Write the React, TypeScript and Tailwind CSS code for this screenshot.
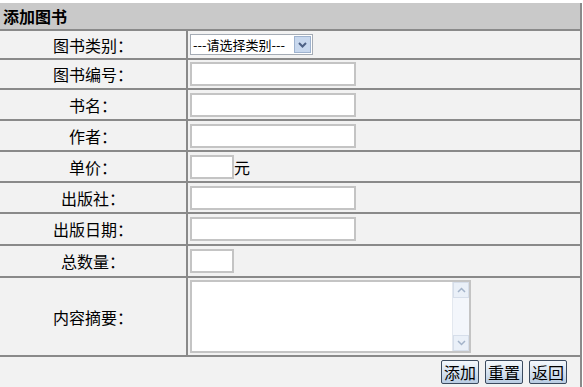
import React from "react";

const font = { fontFamily: '"Noto Sans CJK SC", "DejaVu Sans", sans-serif' };

function Row({ label, h, children }: { label: string; h: string; children: React.ReactNode }) {
  return (
    <div className={`flex ${h} border-b-2 border-[#8a8a8a]`}>
      <div className="w-[186px] flex items-center justify-center text-[16px] text-black bg-[#f2f2f2]">
        {label}
      </div>
      <div className="flex-1 flex items-center pl-[2px] border-l-2 border-[#8a8a8a] bg-[#f2f2f2]">
        {children}
      </div>
    </div>
  );
}

function TextBox({ w }: { w: string }) {
  return <input className={`${w} h-[24px] bg-white border-2 border-[#c4c4c4] outline-none`} />;
}

function Btn({ children }: { children: React.ReactNode }) {
  return (
    <button
      type="button"
      className="h-[24px] px-[2px] text-[16px] leading-none text-black border border-[#3b4a5e] rounded-[2px] bg-gradient-to-b from-[#f4f8fc] to-[#b9cde3]"
    >
      {children}
    </button>
  );
}

export default function App() {
  return (
    <div className="w-[583px] h-[387px] bg-white pt-[3px] overflow-hidden" style={font}>
      <div className="w-[582px] border-r-2 border-[#8a8a8a]">
        <div className="h-[28px] bg-[#c9c9c9] flex items-center pl-[3px] text-[16px] font-bold text-black border-b-2 border-[#8a8a8a]">
          添加图书
        </div>
        <Row label="图书类别：" h="h-[29px]">
          <div className="flex items-center h-[21px] w-[123px] bg-white border border-[#a5acb5] text-[13px] pl-[2px] whitespace-nowrap">
            <span className="flex-1">---请选择类别---</span>
            <span className="w-[17px] h-[17px] mr-[1px] flex items-center justify-center bg-[#c8d8ee] border border-[#9fb3cf]">
              <svg width="9" height="6" viewBox="0 0 9 6">
                <path d="M1 1 L4.5 4.5 L8 1" stroke="#4d6185" strokeWidth="2" fill="none" />
              </svg>
            </span>
          </div>
        </Row>
        <Row label="图书编号：" h="h-[30px]">
          <TextBox w="w-[166px]" />
        </Row>
        <Row label="书名：" h="h-[31px]">
          <TextBox w="w-[166px]" />
        </Row>
        <Row label="作者：" h="h-[31px]">
          <TextBox w="w-[166px]" />
        </Row>
        <Row label="单价：" h="h-[31px]">
          <TextBox w="w-[44px]" />
          <span className="text-[16px] text-black">元</span>
        </Row>
        <Row label="出版社：" h="h-[31px]">
          <TextBox w="w-[166px]" />
        </Row>
        <Row label="出版日期：" h="h-[32px]">
          <TextBox w="w-[166px]" />
        </Row>
        <Row label="总数量：" h="h-[32px]">
          <TextBox w="w-[44px]" />
        </Row>
        <Row label="内容摘要：" h="h-[79px]">
          <div className="w-[281px] h-[73px] flex bg-white border-2 border-[#c4c4c4]">
            <div className="flex-1" />
            <div className="w-[17px] flex flex-col justify-between bg-[#f3f6fb] border-l border-[#e3e8ef]">
              <div className="h-[16px] flex items-center justify-center bg-[#eaf0f8] border border-[#d6deea]">
                <svg width="9" height="6" viewBox="0 0 9 6">
                  <path d="M1 5 L4.5 1.5 L8 5" stroke="#a3b3c9" strokeWidth="1.5" fill="none" />
                </svg>
              </div>
              <div className="h-[16px] flex items-center justify-center bg-[#eaf0f8] border border-[#d6deea]">
                <svg width="9" height="6" viewBox="0 0 9 6">
                  <path d="M1 1 L4.5 4.5 L8 1" stroke="#a3b3c9" strokeWidth="1.5" fill="none" />
                </svg>
              </div>
            </div>
          </div>
        </Row>
        <div className="h-[30px] flex items-center justify-end gap-[6px] pr-[13px] bg-[#f2f2f2]">
          <Btn>添加</Btn>
          <Btn>重置</Btn>
          <Btn>返回</Btn>
        </div>
      </div>
    </div>
  );
}
